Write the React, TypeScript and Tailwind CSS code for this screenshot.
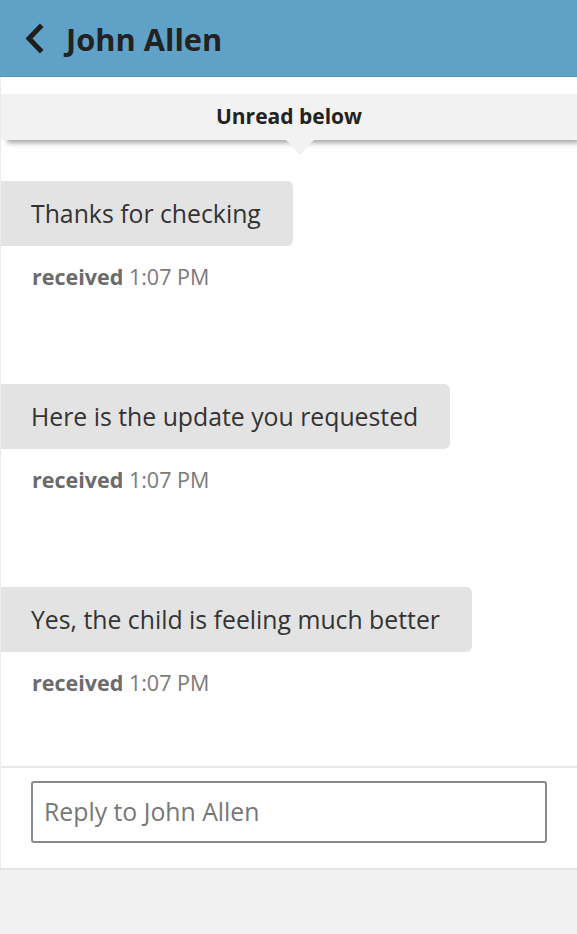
const messages = [
  'Thanks for checking',
  'Here is the update you requested',
  'Yes, the child is feeling much better',
]

function Message({ text }: { text: string }) {
  return (
    <div className="mb-[92px] last:mb-0">
      <div className="inline-flex h-[65px] items-center rounded-r-[6px] bg-[#e3e3e3] pl-[30px] pr-[32px] text-[24.8px] text-[#333]">
        {text}
      </div>
      <div className="mt-[16px] pl-[31px] text-[21.5px] leading-[30px] text-[#7a7a7a]">
        <span className="font-bold text-[#6b6b6b]">received</span> 1:07 PM
      </div>
    </div>
  )
}

export default function App() {
  return (
    <div className="flex h-[934px] w-[577px] flex-col bg-white font-['Open_Sans',sans-serif]">
      <header className="flex h-[77px] shrink-0 items-center border-b border-[#5a96b9] bg-[#60a2c7] pl-[23px]">
        <svg width="22" height="32" viewBox="0 0 22 32" className="mr-[20px] mt-[1px]">
          <polyline points="17,4 6,15.5 17,27" fill="none" stroke="#1e1e1e" strokeWidth="5" strokeLinecap="square" />
        </svg>
        <h1 className="ml-[1px] mt-[2px] text-[30.8px] font-bold text-[#222]">John Allen</h1>
      </header>

      <div className="flex flex-1 flex-col border-l border-[#ececec] pt-[17px]">
        <div className="relative h-[46px] shrink-0 bg-[#f2f2f2] shadow-[4px_5px_5px_-2px_rgba(0,0,0,0.35)]">
          <div className="flex h-full items-center justify-center text-[21px] font-bold text-[#222]">Unread below</div>
          <div className="absolute left-[285px] top-[46px] h-0 w-0 border-x-[14px] border-t-[15px] border-x-transparent border-t-[#f2f2f2]" />
        </div>
        <div className="flex-1 pt-[41px]">
          {messages.map((m) => (
            <Message key={m} text={m} />
          ))}
        </div>
        <div className="h-[102px] shrink-0 border-t-2 border-[#e8e8e8] px-[30px] pt-[13px]">
          <input
            placeholder="Reply to John Allen"
            className="h-[62px] w-[516px] rounded-[3px] border-2 border-[#8a8a8a] px-[11px] pb-[3px] text-[24.8px] text-[#333] outline-none placeholder:text-[#777]"
          />
        </div>
      </div>
      <div className="h-[66px] shrink-0 border-t-2 border-[#e3e3e3] bg-[#f1f1f1]" />
    </div>
  )
}
